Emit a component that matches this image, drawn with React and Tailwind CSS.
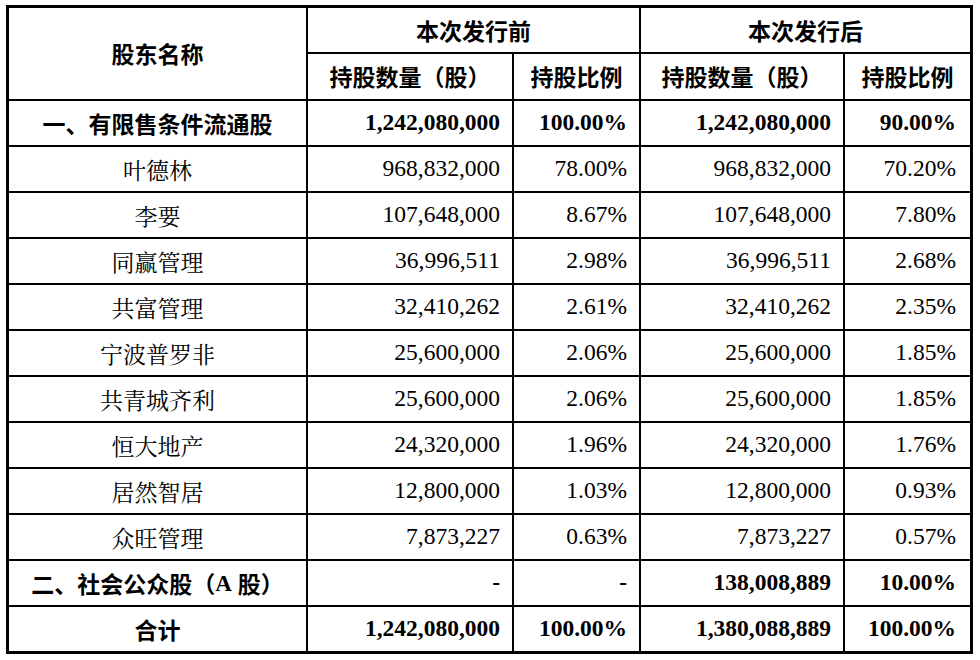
const rows = [
  ["叶德林", "968,832,000", "78.00%", "968,832,000", "70.20%"],
  ["李要", "107,648,000", "8.67%", "107,648,000", "7.80%"],
  ["同赢管理", "36,996,511", "2.98%", "36,996,511", "2.68%"],
  ["共富管理", "32,410,262", "2.61%", "32,410,262", "2.35%"],
  ["宁波普罗非", "25,600,000", "2.06%", "25,600,000", "1.85%"],
  ["共青城齐利", "25,600,000", "2.06%", "25,600,000", "1.85%"],
  ["恒大地产", "24,320,000", "1.96%", "24,320,000", "1.76%"],
  ["居然智居", "12,800,000", "1.03%", "12,800,000", "0.93%"],
  ["众旺管理", "7,873,227", "0.63%", "7,873,227", "0.57%"],
];

const cjkBold = "font-['SimHei','Noto_Sans_CJK_SC',sans-serif] font-bold";
const cjkRegular = "font-['SimSun','Noto_Serif_CJK_SC','Noto_Sans_CJK_SC',serif]";
const num = "font-['Liberation_Serif','Times_New_Roman',serif]";

const Head = ({ children, className = "" }) => (
  <div className={`bg-white flex items-center justify-center text-[23px] leading-none ${cjkBold} ${className}`}>
    {children}
  </div>
);

const Label = ({ children, bold }) => (
  <div className={`bg-white flex items-center justify-center text-[23px] leading-none ${bold ? cjkBold : cjkRegular}`}>
    {children}
  </div>
);

const Num = ({ children, bold, pr = "pr-[12px]" }) => (
  <div className={`bg-white flex items-center justify-end text-[23.5px] leading-none ${num} ${pr} ${bold ? "font-bold" : ""}`}>
    {children}
  </div>
);

const Row = ({ label, values, bold }) => (
  <>
    <Label bold={bold}>{label}</Label>
    <Num bold={bold}>{values[0]}</Num>
    <Num bold={bold}>{values[1]}</Num>
    <Num bold={bold}>{values[2]}</Num>
    <Num bold={bold} pr="pr-[14px]">{values[3]}</Num>
  </>
);

export default function App() {
  return (
    <div className="w-[980px] h-[660px] bg-white text-black pt-[5px] pl-[6px]">
      <div className="inline-grid bg-black p-[3px] gap-[2px] grid-cols-[297px_204px_125px_202px_125px] grid-rows-[44px_45px_repeat(12,44px)]">
        <Head className="row-span-2">股东名称</Head>
        <Head className="col-span-2">本次发行前</Head>
        <Head className="col-span-2">本次发行后</Head>
        <Head>持股数量（股）</Head>
        <Head>持股比例</Head>
        <Head>持股数量（股）</Head>
        <Head>持股比例</Head>

        <Row
          bold
          label="一、有限售条件流通股"
          values={["1,242,080,000", "100.00%", "1,242,080,000", "90.00%"]}
        />
        {rows.map((r) => (
          <Row key={r[0]} label={r[0]} values={r.slice(1)} />
        ))}
        <Row
          bold
          label={
            <>
              二、社会公众股（<span className={`${num} font-bold`}>A</span>
              <span className="ml-[6px]">股）</span>
            </>
          }
          values={["-", "-", "138,008,889", "10.00%"]}
        />
        <Row
          bold
          label="合计"
          values={["1,242,080,000", "100.00%", "1,380,088,889", "100.00%"]}
        />
      </div>
    </div>
  );
}
